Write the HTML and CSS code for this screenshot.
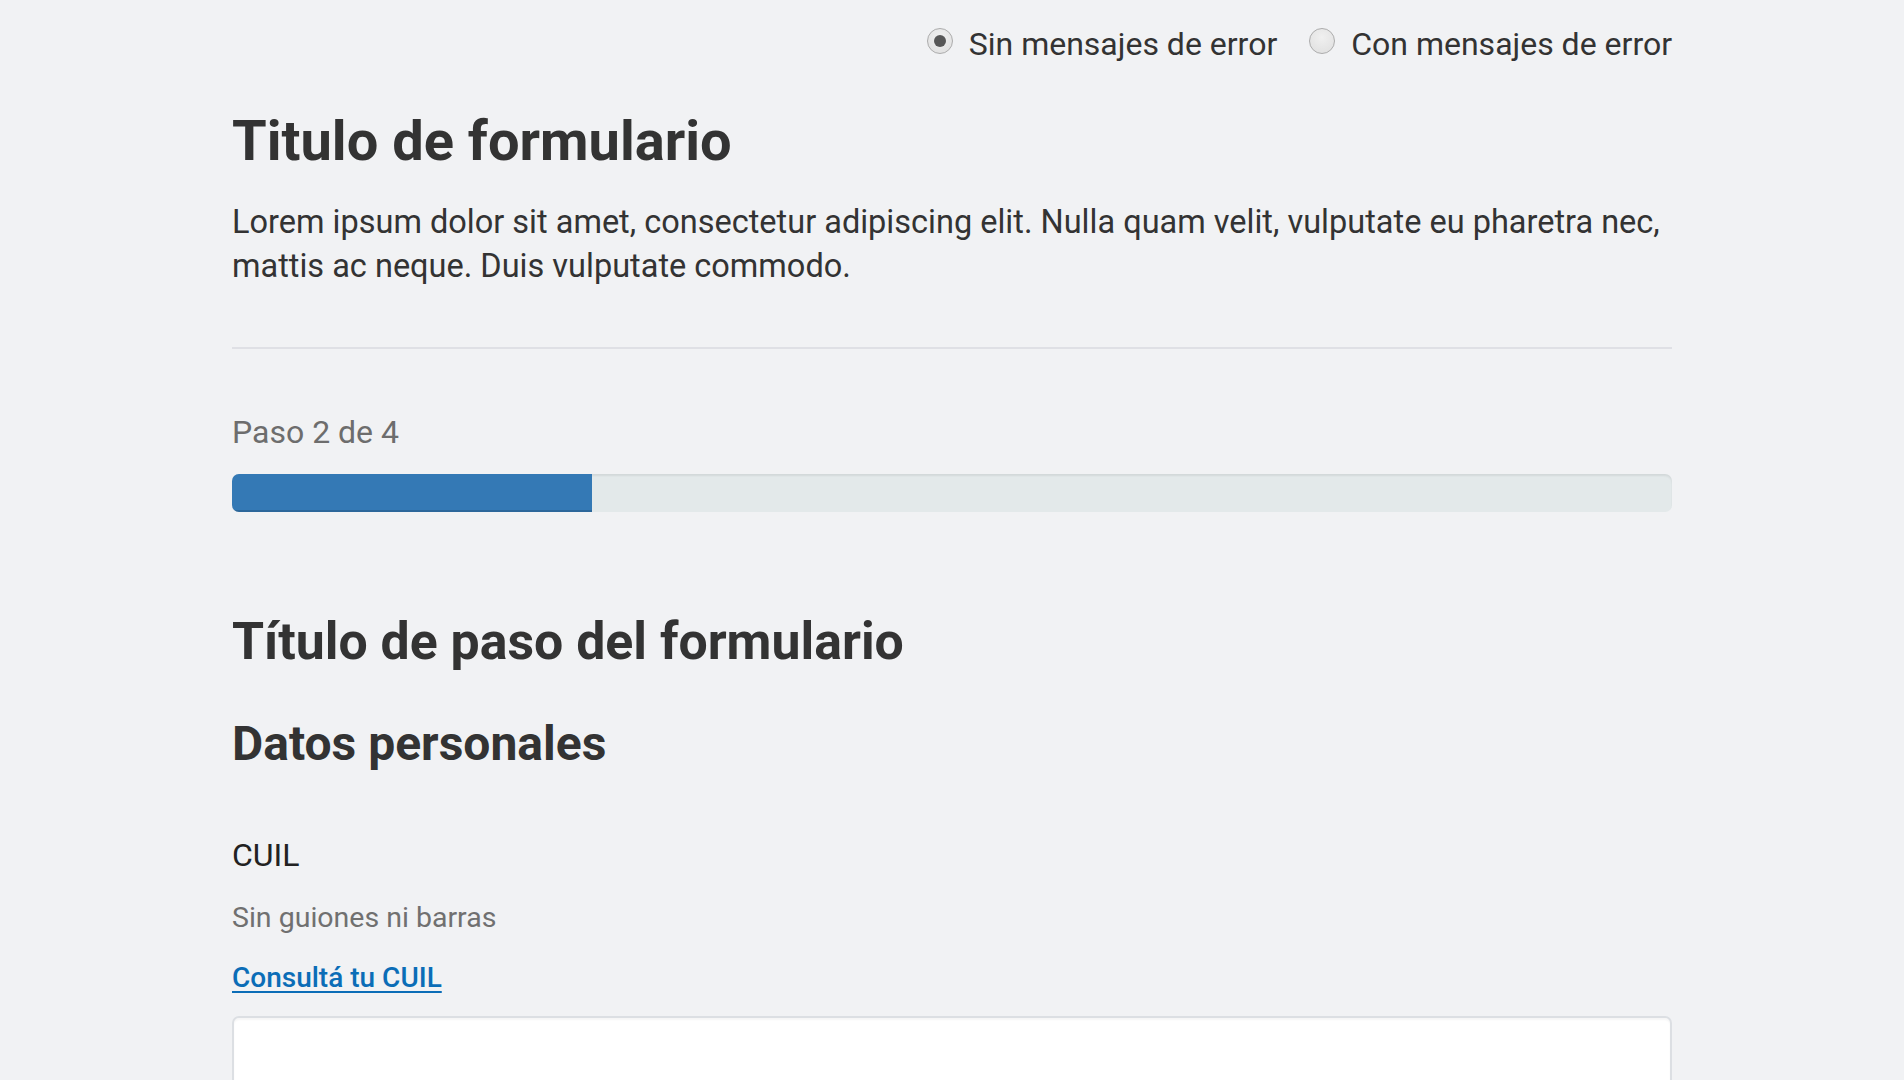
FILE: index.html
```html
<!DOCTYPE html>
<html lang="es">
<head>
<meta charset="utf-8">
<title>Formulario</title>
<link rel="stylesheet" href="styles.css">
</head>
<body>
<div class="container">
  <div class="mode-switch">
    <label class="radio-opt"><span class="radio checked"></span><span class="radio-text">Sin mensajes de error</span></label>
    <label class="radio-opt"><span class="radio"></span><span class="radio-text">Con mensajes de error</span></label>
  </div>
  <h1 class="form-title">Titulo de formulario</h1>
  <p class="lead">Lorem ipsum dolor sit amet, consectetur adipiscing elit. Nulla quam velit, vulputate eu pharetra nec, mattis ac neque. Duis vulputate commodo.</p>
  <hr class="divider">
  <p class="step-label">Paso 2 de 4</p>
  <div class="progress"><div class="progress-bar" style="width:25%"></div></div>
  <h2 class="step-title">Título de paso del formulario</h2>
  <h3 class="section-title">Datos personales</h3>
  <label class="field-label">CUIL</label>
  <p class="help">Sin guiones ni barras</p>
  <a class="field-link" href="#">Consultá tu CUIL</a>
  <div class="input"></div>
</div>
</body>
</html>
```
FILE: styles.css
```css
html, body {
  margin: 0;
  padding: 0;
  background: #f1f2f4;
  font-family: Roboto, "Liberation Sans", sans-serif;
  color: #333;
}
.container {
  width: 1440px;
  margin: 0 auto;
  display: flex;
  flex-direction: column;
  align-items: flex-start;
}
.mode-switch {
  align-self: flex-end;
  display: flex;
  gap: 32px;
  padding-top: 24px;
}
.radio-opt {
  display: flex;
  align-items: center;
  gap: 16px;
  font-size: 32px;
  line-height: 40px;
  color: #333;
}
.radio {
  width: 24px;
  height: 24px;
  border-radius: 50%;
  border: 1px solid #acacac;
  background: radial-gradient(circle at 50% 35%, #f0f0f0 0%, #dedede 100%);
  margin-bottom: 6px;
  display: flex;
  align-items: center;
  justify-content: center;
}
.radio.checked::after {
  content: "";
  width: 12px;
  height: 12px;
  border-radius: 50%;
  background: #575757;
}
.form-title {
  margin: 44px 0 0;
  font-size: 56px;
  line-height: 66px;
  font-weight: 700;
  color: #333;
}
.lead {
  margin: 26px 0 0;
  font-size: 32.5px;
  line-height: 44px;
  color: #333;
}
.divider {
  align-self: stretch;
  margin: 59px 0 0;
  border: 0;
  height: 2px;
  background: #dfe0e5;
}
.step-label {
  margin: 63px 0 0;
  font-size: 32px;
  line-height: 40px;
  color: #6d6d6d;
}
.progress {
  align-self: stretch;
  margin-top: 22px;
  height: 38px;
  border-radius: 7px;
  background: #e3e9ea;
  box-shadow: inset 0 2px 2px rgba(0,0,0,0.07);
  overflow: hidden;
}
.progress-bar {
  height: 100%;
  background: #3479b5;
  box-shadow: inset 0 -2px 0 rgba(0,0,0,0.15);
}
.step-title {
  margin: 102px 0 0;
  font-size: 51.8px;
  line-height: 56px;
  font-weight: 700;
  color: #333;
}
.section-title {
  margin: 46px 0 0;
  font-size: 48px;
  line-height: 56px;
  font-weight: 700;
  color: #333;
}
.field-label {
  margin-top: 63px;
  font-size: 32px;
  line-height: 40px;
  color: #222;
}
.help {
  margin: 25px 0 0;
  font-size: 28.5px;
  line-height: 36px;
  color: #707070;
}
.field-link {
  margin-top: 24px;
  font-size: 28px;
  line-height: 36px;
  font-weight: 500;
  color: #0b6db7;
  text-decoration: underline;
  text-decoration-thickness: 2px;
  text-underline-offset: 4px;
}
.input {
  align-self: stretch;
  margin-top: 20px;
  height: 80px;
  background: #fff;
  border: 2px solid #dcdfe3;
  border-radius: 7px;
  box-shadow: inset 0 2px 2px rgba(0,0,0,0.04);
}
```
